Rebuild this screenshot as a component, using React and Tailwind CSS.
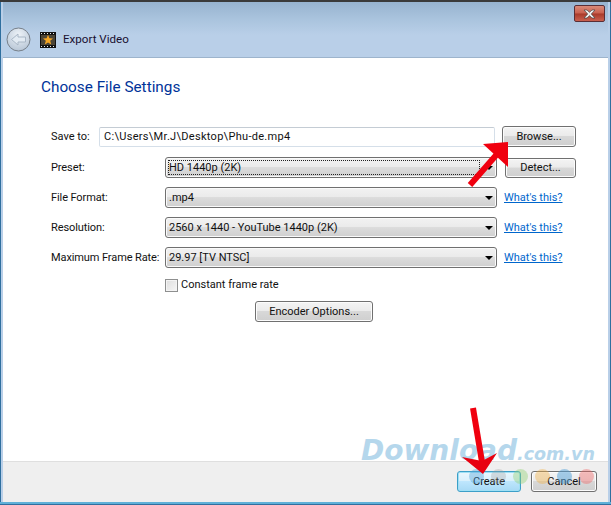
import React from 'react';

const font = { fontFamily: 'Roboto, "Liberation Sans", sans-serif' };

const btnBase = 'flex items-center justify-center pt-px rounded-[3px] border text-[11px] text-[#111]';
const btn = `${btnBase} border-[#707070] bg-[linear-gradient(#f4f4f4_0%,#ebebeb_45%,#d8d8d8_50%,#cfcfcf_100%)] shadow-[inset_0_0_0_1px_#fcfcfc]`;
const btnDefault = `${btnBase} border-[#3c9fc8] bg-[linear-gradient(#eaf6fd_0%,#d9f0fc_45%,#bee6fd_50%,#a7d9f5_100%)] shadow-[inset_0_0_0_1px_#9fe0f5]`;

const Select = ({ value, focus }) => (
  <div className="flex items-center justify-between w-[332px] h-[21px] rounded-[3px] border border-[#707070] bg-[linear-gradient(#f2f2f2_0%,#ebebeb_45%,#dcdcdc_50%,#cfcfcf_100%)] shadow-[inset_0_0_0_1px_#fafafa] pl-[2px] pr-[3px]">
    <span className={focus ? 'flex-1 h-[15px] leading-[14px] border border-dotted border-[#222] text-[11px] text-[#111]' : 'pl-px pt-px text-[11px] text-[#111]'}>{value}</span>
    <span className="ml-[5px] w-0 h-0 border-x-[4px] border-x-transparent border-t-[4px] border-t-black" />
  </div>
);

const Row = ({ label, children, link }) => (
  <div className="flex items-center h-[21px] mb-[9px]">
    <span className="w-[114px] pt-px whitespace-nowrap text-[11px] tracking-[-0.1px] text-[#111]">{label}</span>
    {children}
    {link && <a className="ml-[7px] pt-px text-[11px] text-[#0066cc] underline">What's this?</a>}
  </div>
);

function App() {
  return (
    <div className="relative w-[611px] h-[505px] overflow-hidden bg-[#b9cfe8] border-t-2 border-t-[#3a3a3a]" style={font}>
      {/* Title bar */}
      <div className="flex items-center justify-between h-[55px] pl-[6px] pr-[6px] bg-[linear-gradient(#97b3cf_0%,#a9c3dd_30%,#b9cfe8_60%)]">
        <div className="flex items-center mt-[20px]">
          <svg width="25" height="25" viewBox="0 0 25 25">
            <defs>
              <radialGradient id="glass" cx="50%" cy="30%" r="70%">
                <stop offset="0" stopColor="#eef3f8" />
                <stop offset="1" stopColor="#b8c6d6" />
              </radialGradient>
            </defs>
            <circle cx="12.5" cy="12.5" r="11.5" fill="url(#glass)" stroke="#77808a" strokeWidth="1" />
            <path d="M5.5 12.5 L12 7 V10 H19.5 V15 H12 V18 Z" fill="#e3ebf3" stroke="#a9b7c6" strokeWidth="1" />
          </svg>
          <svg className="ml-[9px]" width="16" height="16" viewBox="0 0 16 16">
            <rect width="16" height="16" fill="#111" />
            <path d="M1 1h1v1H1zM4 1h1v1H4zM7 1h1v1H7zM10 1h1v1h-1zM13 1h1v1h-1zM1 14h1v1H1zM4 14h1v1H4zM7 14h1v1H7zM10 14h1v1h-1zM13 14h1v1h-1z" fill="#eee" />
            <rect x="1" y="3" width="14" height="10" fill="#4b4436" />
            <path d="M8 2.8 9.4 6.3 13 6.5 10.2 8.7 11.2 12.4 8 10.4 4.8 12.4 5.8 8.7 3 6.5 6.6 6.3Z" fill="#f5a623" />
          </svg>
          <span className="ml-[7px] text-[11.6px] text-[#1a1030]">Export Video</span>
        </div>
        <div className="flex items-center justify-center self-start mt-[3px] w-[31px] h-[17px] rounded-[2px] border border-[#5a2e35] bg-[linear-gradient(#d98a78_0%,#c9604f_48%,#a83a2a_52%,#c9604f_100%)]">
          <svg width="13" height="10" viewBox="0 0 13 10">
            <path d="M1 1h3l2.5 2.3L9 1h3L8.3 5 12 9H9L6.5 6.7 4 9H1l3.7-4Z" fill="#eee" stroke="#444" strokeWidth="0.7" />
          </svg>
        </div>
      </div>

      {/* Content */}
      <div className="mx-[3px] h-[404px] bg-white border-t border-t-[#9db4cc] pl-[38px] pr-[32px]">
        <h1 className="pt-[19px] h-[68px] text-[15.3px] leading-[20px] text-[#003399]">Choose File Settings</h1>
        <div className="pl-[10px]">
          <div className="flex items-center h-[21px] mb-[10px]">
            <span className="w-[48px] pt-px text-[11px] text-[#111]">Save to:</span>
            <div className="flex items-center w-[396px] h-[20px] rounded-[2px] border border-[#d5dfe9] border-t-[#c4ccd4] pl-[4px] pt-px text-[11px] tracking-[0.3px] text-[#111]">C:\Users\Mr.J\Desktop\Phu-de.mp4</div>
            <div className={`${btn} ml-[7px] w-[74px] h-[21px]`}>Browse...</div>
          </div>
          <div className="relative">
            <Row label="Preset:"><Select value="HD 1440p (2K)" focus /></Row>
            <div className={`${btn} absolute left-[454px] top-[1px] w-[71px] h-[20px]`}>Detect...</div>
          </div>
          <Row label="File Format:" link><Select value=".mp4" /></Row>
          <Row label="Resolution:" link><Select value="2560 x 1440 - YouTube 1440p (2K)" /></Row>
          <Row label="Maximum Frame Rate:" link><Select value="29.97 [TV NTSC]" /></Row>
          <div className="flex items-center ml-[114px] h-[13px] mt-[11px]">
            <span className="w-[13px] h-[13px] border border-[#8e8f8f] bg-[linear-gradient(135deg,#dedede,#f6f6f6)] shadow-[inset_0_0_0_1px_#f4f4f4]" />
            <span className="ml-[3px] text-[11px] text-[#111]">Constant frame rate</span>
          </div>
          <div className={`${btn} ml-[204px] mt-[9px] w-[118px] h-[21px]`}>Encoder Options...</div>
        </div>
      </div>

      {/* Footer */}
      <div className="flex justify-end items-start mx-[3px] h-[41px] bg-[#efefef] border-t border-t-[#dfdfdf] pt-[9px] pr-[11px] gap-[10px]">
        <div className={`${btnDefault} w-[64px] h-[21px]`}>Create</div>
        <div className={`${btn} w-[66px] h-[21px]`}>Cancel</div>
      </div>
      <div className="absolute left-0 top-0 bottom-0 w-[3px] bg-[#b9cfe8] border-l border-l-[#2f6f9f]" />
      <div className="absolute right-0 top-0 bottom-0 w-[3px] bg-[#b9cfe8] border-r border-r-[#2f6f9f]" />
      <div className="absolute left-0 right-0 bottom-0 h-[3px] bg-[#5fb0d8] border-b border-b-[#2f6f9f]" />

      {/* Watermark */}
      <div className="absolute left-[361px] top-[433px] flex items-baseline italic font-bold text-[#b5d7ec] whitespace-nowrap" style={{ fontFamily: '"DejaVu Sans", sans-serif' }}>
        <span className="text-[28px] leading-[32px]">Download</span>
        <span className="text-[17.5px] leading-[32px]">.com.vn</span>
      </div>
      <div className="absolute left-[469px] top-[467px] flex gap-[7px]">
        <span className="w-[15px] h-[15px] rounded-full bg-[#4f9fd8]/40" />
        <span className="w-[15px] h-[15px] rounded-full bg-[#999999]/30" />
        <span className="w-[15px] h-[15px] rounded-full bg-[#8fcf6f]/40" />
        <span className="w-[15px] h-[15px] rounded-full bg-[#f0b040]/40" />
        <span className="w-[15px] h-[15px] rounded-full bg-[#4f9fd8]/50" />
        <span className="w-[15px] h-[15px] rounded-full bg-[#f06060]/40" />
      </div>

      {/* Red arrows over the dialog */}
      <svg className="absolute left-0 top-[-2px]" width="611" height="505" viewBox="0 0 611 505">
        <path d="M470 185 L498 153" stroke="#f0000f" strokeWidth="6" fill="none" />
        <path d="M483 144 L508 142 L508 167 Z" fill="#f0000f" />
        <path d="M473 408 L482 462" stroke="#f0000f" strokeWidth="6" fill="none" />
        <path d="M462 457 L482 461 L497 453 L483 474 Z" fill="#e8000f" />
      </svg>
    </div>
  );
}

export default App;
